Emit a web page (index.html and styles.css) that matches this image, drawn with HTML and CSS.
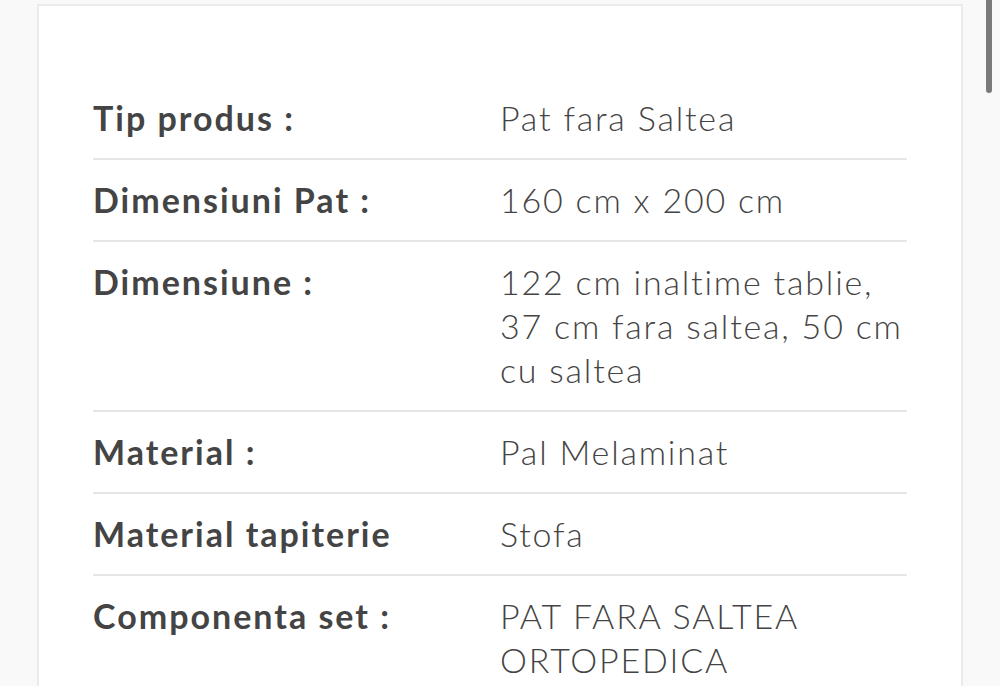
FILE: index.html
```html
<!DOCTYPE html>
<html lang="ro">
<head>
<meta charset="utf-8">
<title>Specificatii produs</title>
<link rel="stylesheet" href="styles.css">
</head>
<body>
<div class="page">
  <main class="main">
    <section class="card">
      <div class="specs">
        <div class="row"><div class="label">Tip produs :</div><div class="value">Pat fara Saltea</div></div>
        <div class="row"><div class="label">Dimensiuni Pat :</div><div class="value">160 cm x 200 cm</div></div>
        <div class="row"><div class="label">Dimensiune :</div><div class="value">122 cm inaltime tablie, 37 cm fara saltea, 50 cm cu saltea</div></div>
        <div class="row"><div class="label">Material :</div><div class="value">Pal Melaminat</div></div>
        <div class="row"><div class="label">Material tapiterie</div><div class="value">Stofa</div></div>
        <div class="row"><div class="label">Componenta set :</div><div class="value">PAT FARA SALTEA ORTOPEDICA</div></div>
      </div>
    </section>
  </main>
  <div class="track"><div class="thumb"></div></div>
</div>
</body>
</html>
```

FILE: styles.css
```css
html, body {
  margin: 0;
  padding: 0;
  height: 100%;
  overflow: hidden;
}
body {
  background: #f9f9f9;
  font-family: "Lato", "Open Sans", sans-serif;
  color: #444;
}
.page {
  display: flex;
  height: 686px;
}
.main {
  width: 965px;
  flex: none;
}
.card {
  margin: 4px 0 0 37px;
  width: 926px;
  height: 800px;
  background: #fff;
  border: 2px solid #ebebeb;
  padding: 72px 54px 0 54px;
  box-sizing: border-box;
}
.specs {
  display: flex;
  flex-direction: column;
}
.row {
  display: grid;
  grid-template-columns: 407px 416px;
  padding: 18px 0;
  border-bottom: 2px solid #e6e6e6;
  font-size: 34px;
  line-height: 44px;
  letter-spacing: 2px;
}
.label {
  font-weight: 700;
  color: #444;
}
.value {
  font-weight: 300;
  color: #444;
  letter-spacing: 1.8px;
}
.track {
  position: relative;
  flex: 1;
  background: #f9f9f9;
}
.thumb {
  position: absolute;
  left: 21px;
  top: 0;
  width: 6px;
  height: 93px;
  background: #7a7a7a;
  border-radius: 0 0 3px 3px;
}
```
